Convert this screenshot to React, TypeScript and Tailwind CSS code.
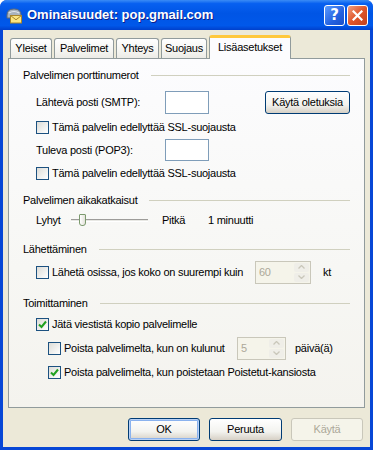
import React from "react"

const font = "font-['Tahoma','Liberation_Sans',sans-serif] text-[11px] tracking-[-0.25px] text-black"

function Check({ checked = false }: { checked?: boolean }) {
  return (
    <span className="w-[13px] h-[13px] shrink-0 border border-[#1C5180] bg-[linear-gradient(135deg,#DCDCD7_0%,#FFFFFF_100%)] flex items-center justify-center">
      {checked && (
        <svg width="9" height="9" viewBox="0 0 9 9">
          <path d="M1 4.5 L3.5 7 L8 1.5" fill="none" stroke="#21A121" strokeWidth="2" />
        </svg>
      )}
    </span>
  )
}

function Group({ title }: { title: string }) {
  return (
    <div className="h-[20px] flex items-center">
      <span>{title}</span>
      <div className="flex-1 ml-[12px] h-[1px] bg-[#D0D0BF]" />
    </div>
  )
}

function Spin({ value, w }: { value: string; w: string }) {
  return (
    <div className={`${w} h-[23px] border border-[#C9C7BA] bg-[#F5F4EA] flex items-center pl-[3px] pr-[1px] text-[#ACA899]`}>
      <span className="flex-1">{value}</span>
      <div className="w-[15px] h-[19px] flex flex-col gap-[1px]">
        <div className="flex-1 rounded-[2px] bg-[#EFEEE8] flex items-center justify-center">
          <svg width="7" height="4" viewBox="0 0 7 4"><path d="M0.5 3.5 L3.5 0.5 L6.5 3.5" fill="none" stroke="#C9C7BA" strokeWidth="1.3" /></svg>
        </div>
        <div className="flex-1 rounded-[2px] bg-[#EFEEE8] flex items-center justify-center">
          <svg width="7" height="4" viewBox="0 0 7 4"><path d="M0.5 0.5 L3.5 3.5 L6.5 0.5" fill="none" stroke="#C9C7BA" strokeWidth="1.3" /></svg>
        </div>
      </div>
    </div>
  )
}

function Btn({ label, w, def = false, disabled = false }: { label: string; w: string; def?: boolean; disabled?: boolean }) {
  return (
    <div
      className={`${w} h-[23px] rounded-[3px] border flex items-center justify-center ${
        disabled
          ? "border-[#C9C7BA] bg-[#F5F4EA] text-[#ACA899]"
          : "border-[#003C74] bg-[linear-gradient(to_bottom,#FFFFFF_0%,#F3F3EF_60%,#D6D0C5_100%)]"
      } ${def ? "shadow-[inset_0_0_0_1px_#B8D1F6,inset_0_0_0_2px_#8AB2EE]" : ""}`}
    >
      {label}
    </div>
  )
}

export default function App() {
  return (
    <div className={`w-[373px] h-[450px] bg-[#0747D6] rounded-t-[7px] flex flex-col overflow-hidden ${font}`}>
      {/* title bar */}
      <div className="h-[30px] shrink-0 flex items-center pl-[5px] pr-[5px] bg-[linear-gradient(to_bottom,#3B8CF5_0%,#0760F0_12%,#0055E5_45%,#0058EA_85%,#0040CC_100%)]">
        <svg width="18" height="17" viewBox="0 0 18 17">
          <path d="M2 8 Q2 2 9 2 Q16 2 16 8 L16 11 L2 11 Z" fill="#A9B3BD" stroke="#5E6A76" strokeWidth="1" />
          <path d="M4 6 Q9 3 14 6" fill="none" stroke="#E3E8EE" strokeWidth="1.2" />
          <rect x="5.5" y="8.5" width="11" height="7.5" fill="#FBE580" stroke="#A8862B" strokeWidth="1" />
          <path d="M5.5 8.5 L11 12.8 L16.5 8.5" fill="none" stroke="#A8862B" strokeWidth="1" />
        </svg>
        <span className="ml-[4px] text-white font-bold text-[13px] tracking-normal font-['Trebuchet_MS','Liberation_Sans',sans-serif] [text-shadow:1px_1px_0_#0A1E8C]">
          Ominaisuudet: pop.gmail.com
        </span>
        <div className="ml-auto flex gap-[2px]">
          <div className="w-[21px] h-[21px] rounded-[3px] border border-white bg-[linear-gradient(135deg,#5A9BFF_0%,#2461E0_60%,#1A4FC8_100%)] flex items-center justify-center text-white font-bold text-[15px] font-['DejaVu_Sans',sans-serif]">
            ?
          </div>
          <div className="w-[21px] h-[21px] rounded-[3px] border border-white bg-[linear-gradient(135deg,#F0A080_0%,#E0552A_50%,#C2401C_100%)] flex items-center justify-center">
            <svg width="11" height="11" viewBox="0 0 11 11">
              <path d="M1.5 1.5 L9.5 9.5 M9.5 1.5 L1.5 9.5" stroke="white" strokeWidth="2.2" strokeLinecap="square" />
            </svg>
          </div>
        </div>
      </div>

      {/* body */}
      <div className="flex-1 mx-[3px] mb-[3px] bg-[#ECE9D8] px-[5px] pt-[5px] flex flex-col">
        {/* tabs */}
        <div className="flex items-end ml-[2px] h-[23px] gap-[2px] relative z-10">
          {["Yleiset", "Palvelimet", "Yhteys", "Suojaus"].map((t, i) => (
            <div
              key={t}
              className={`h-[20px] ${["w-[42px]", "w-[60px]", "w-[43px]", "w-[46px]"][i]} border border-b-0 border-[#919B9C] rounded-t-[3px] bg-[linear-gradient(to_bottom,#FFFFFF_0%,#F3F3EF_70%,#ECEBE6_100%)] flex items-center justify-center`}
            >
              {t}
            </div>
          ))}
          <div className="w-[82px] h-[24px] -mb-[1px] border border-b-0 border-[#919B9C] border-t-[3px] border-t-[#FFC83C] rounded-t-[3px] bg-[#FCFCFE] flex items-center justify-center pb-[2px]">
            Lisäasetukset
          </div>
        </div>

        {/* panel */}
        <div className="h-[350px] border border-[#919B9C] bg-[linear-gradient(to_bottom,#FCFCFE_0%,#F7F7F4_60%,#F4F3EE_100%)] pl-[14px] pr-[14px] pt-[6px] flex flex-col">
          <Group title="Palvelimen porttinumerot" />
          <div className="h-[24px] mt-[5px] pl-[13px] flex items-center">
            <span className="w-[129px]">Lähtevä posti (SMTP):</span>
            <div className="w-[44px] h-[23px] border border-[#7F9DB9] bg-white" />
            <div className="ml-auto">
              <Btn label="Käytä oletuksia" w="w-[85px]" />
            </div>
          </div>
          <div className="h-[20px] mt-[3px] pl-[13px] flex items-center gap-[3px]">
            <Check />
            <span>Tämä palvelin edellyttää SSL-suojausta</span>
          </div>
          <div className="h-[24px] mt-[1px] pl-[13px] flex items-center">
            <span className="w-[129px]">Tuleva posti (POP3):</span>
            <div className="w-[44px] h-[22px] border border-[#7F9DB9] bg-white" />
          </div>
          <div className="h-[20px] mt-[1px] pl-[13px] flex items-center gap-[3px]">
            <Check />
            <span>Tämä palvelin edellyttää SSL-suojausta</span>
          </div>

          <div className="mt-[7px]">
            <Group title="Palvelimen aikakatkaisut" />
          </div>
          <div className="h-[20px] pl-[13px] flex items-center">
            <span className="w-[35px]">Lyhyt</span>
            <div className="relative w-[77px] h-[20px] flex items-center">
              <div className="w-full h-[3px] border-t border-[#9D9C99] border-b border-b-white bg-[#E8E8E4]" />
              <div className="absolute left-[8px] top-[4px] w-[7px] h-[12px] rounded-b-[3px] rounded-t-[1px] border border-[#7C9A6E] bg-[linear-gradient(to_right,#FFFFFF,#E3E2DA)]" />
            </div>
            <span className="ml-[14px] w-[46px]">Pitkä</span>
            <span>1 minuutti</span>
          </div>

          <div className="mt-[9px]">
            <Group title="Lähettäminen" />
          </div>
          <div className="h-[24px] mt-[1px] pl-[13px] flex items-center">
            <Check />
            <span className="ml-[3px] w-[203px]">Lähetä osissa, jos koko on suurempi kuin</span>
            <Spin value="60" w="w-[56px]" />
            <span className="ml-[12px]">kt</span>
          </div>

          <div className="mt-[9px]">
            <Group title="Toimittaminen" />
          </div>
          <div className="h-[20px] mt-[1px] pl-[13px] flex items-center gap-[3px]">
            <Check checked />
            <span>Jätä viestistä kopio palvelimelle</span>
          </div>
          <div className="h-[24px] mt-[2px] pl-[25px] flex items-center">
            <Check />
            <span className="ml-[3px] w-[173px]">Poista palvelimelta, kun on kulunut</span>
            <Spin value="5" w="w-[49px]" />
            <span className="ml-[9px]">päivä(ä)</span>
          </div>
          <div className="h-[20px] mt-[2px] pl-[25px] flex items-center gap-[3px]">
            <Check checked />
            <span>Poista palvelimelta, kun poistetaan Poistetut-kansiosta</span>
          </div>
        </div>

        {/* buttons */}
        <div className="mt-[10px] flex justify-end gap-[9px] pr-[2px]">
          <Btn label="OK" w="w-[72px]" def />
          <Btn label="Peruuta" w="w-[73px]" />
          <Btn label="Käytä" w="w-[72px]" disabled />
        </div>
      </div>
    </div>
  )
}
